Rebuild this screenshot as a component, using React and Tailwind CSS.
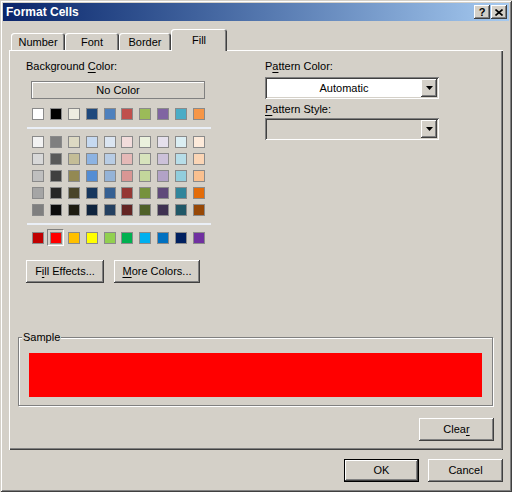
import React from "react";

const raised =
  "shadow-[inset_-1px_-1px_#404040,inset_1px_1px_#ffffff,inset_-2px_-2px_#808080]";
const sunken =
  "shadow-[inset_1px_1px_#808080,inset_-1px_-1px_#ffffff,inset_2px_2px_#404040,inset_-2px_-2px_#d4d0c8]";

const row1 = ["#FFFFFF", "#000000", "#EEECE1", "#1F497D", "#4F81BD", "#C0504D", "#9BBB59", "#8064A2", "#4BACC6", "#F79646"];
const tints = [
  ["#F2F2F2", "#7F7F7F", "#DDD9C3", "#C6D9F0", "#DBE5F1", "#F2DCDB", "#EBF1DD", "#E5E0EC", "#DBEEF3", "#FDEADA"],
  ["#D8D8D8", "#595959", "#C4BD97", "#8DB3E2", "#B8CCE4", "#E5B9B7", "#D7E3BC", "#CCC1D9", "#B7DDE8", "#FBD5B5"],
  ["#BFBFBF", "#3F3F3F", "#938953", "#548DD4", "#95B3D7", "#D99694", "#C3D69B", "#B2A2C7", "#92CDDC", "#FAC08F"],
  ["#A5A5A5", "#262626", "#494429", "#17365D", "#366092", "#953734", "#76923C", "#5F497A", "#31859B", "#E36C09"],
  ["#7F7F7F", "#0C0C0C", "#1D1B10", "#0F243E", "#244061", "#632423", "#4F6128", "#3F3151", "#205867", "#974806"],
];
const standard = ["#C00000", "#FF0000", "#FFC000", "#FFFF00", "#92D050", "#00B050", "#00B0F0", "#0070C0", "#002060", "#7030A0"];

function Swatch({ color, selected }) {
  return (
    <div className="relative w-[12px] h-[12px]">
      {selected && (
        <div className="absolute -left-[3px] -top-[3px] w-[17px] h-[17px] border border-t-[#808080] border-l-[#808080] border-r-white border-b-white" />
      )}
      <div
        className="relative w-[12px] h-[12px] border border-[#8a8a8a]"
        style={{ backgroundColor: color }}
      />
    </div>
  );
}

function SwatchRow({ colors, selectedIndex }) {
  return (
    <div className="ml-[6px] w-[173px] flex justify-between">
      {colors.map((c, i) => (
        <Swatch key={i} color={c} selected={i === selectedIndex} />
      ))}
    </div>
  );
}

function U({ children }) {
  return <span className="underline underline-offset-[2px] decoration-[1px]">{children}</span>;
}

function Arrow() {
  return (
    <svg width="7" height="4" viewBox="0 0 7 4">
      <polygon points="0,0 7,0 3.5,4" fill="#000" />
    </svg>
  );
}

function Dropdown({ value, disabled }) {
  return (
    <div
      className={`w-[174px] h-[22px] p-[2px] flex ${sunken} ${disabled ? "bg-[#d4d0c8]" : "bg-white"}`}
    >
      <div className="flex-1 flex items-center justify-center">{value}</div>
      <div className={`w-[16px] h-[18px] bg-[#d4d0c8] flex items-center justify-center ${raised}`}>
        <Arrow />
      </div>
    </div>
  );
}

function Button({ children, w, isDefault }) {
  return (
    <div
      className={`h-[23px] flex items-center justify-center bg-[#d4d0c8] ${
        isDefault
          ? "shadow-[inset_0_0_0_1px_#000000,inset_-2px_-2px_#404040,inset_2px_2px_#ffffff,inset_-3px_-3px_#808080]"
          : raised
      } ${w}`}
    >
      {children}
    </div>
  );
}

function Tab({ label, w, selected }) {
  return (
    <div
      className={`${w} flex items-center justify-center bg-[#d4d0c8] rounded-t-[3px] shadow-[inset_1px_1px_#ffffff,inset_-1px_0_#404040,inset_-2px_0_#808080] ${
        selected ? "relative z-10 h-[22px] -mb-[1px] pt-[1px]" : "h-[17px] pt-[1px]"
      }`}
    >
      {label}
    </div>
  );
}

export default function App() {
  return (
    <div className="w-[512px] h-[492px] bg-[#d4d0c8] p-[3px] text-[11px] leading-[13px] text-black font-['Liberation_Sans',Arial,sans-serif] shadow-[inset_1px_1px_#d4d0c8,inset_-1px_-1px_#404040,inset_2px_2px_#ffffff,inset_-2px_-2px_#808080] flex flex-col">
      {/* Title bar */}
      <div className="h-[18px] bg-linear-to-r from-[#0a246a] to-[#a6caf0] flex items-center pl-[3px] pr-[2px]">
        <div className="flex-1 text-white font-bold text-[12px] leading-[14px]">Format Cells</div>
        <div className="flex gap-[1px]">
          <div className={`w-[16px] h-[14px] bg-[#d4d0c8] flex items-center justify-center font-bold text-[11px] leading-[12px] ${raised}`}>
            ?
          </div>
          <div className={`w-[16px] h-[14px] bg-[#d4d0c8] flex items-center justify-center ${raised}`}>
            <svg width="8" height="7" viewBox="0 0 8 7">
              <path d="M0.5 0.5 L7.5 6.5 M7.5 0.5 L0.5 6.5" stroke="#000" strokeWidth="1.6" />
            </svg>
          </div>
        </div>
      </div>

      {/* Tabs */}
      <div className="mt-[8px] ml-[8px] h-[21px] flex items-end">
        <Tab label="Number" w="w-[54px]" />
        <Tab label="Font" w="w-[54px]" />
        <Tab label="Border" w="w-[52px]" />
        <Tab label="Fill" w="w-[56px]" selected />
      </div>

      {/* Panel */}
      <div className="ml-[6px] w-[494px] h-[400px] flex flex-col shadow-[inset_1px_1px_#ffffff,inset_-1px_-1px_#404040,inset_-2px_-2px_#808080]">
        <div className="flex pt-[10px] pl-[17px]">
          {/* Left column */}
          <div className="w-[239px] flex flex-col">
            <div className="h-[13px]">
              Background <U>C</U>olor:
            </div>
            <div className="mt-[8px] ml-[5px] w-[174px] h-[18px] border border-[#808080] shadow-[inset_1px_1px_#ffffff] flex items-center justify-center">
              No Color
            </div>
            <div className="mt-[9px]">
              <SwatchRow colors={row1} />
            </div>
            <div className="mt-[7px] ml-[1px] w-[184px] h-[2px] bg-[#eaeff7]" />
            <div className="mt-[7px] flex flex-col gap-[5px]">
              {tints.map((r, i) => (
                <SwatchRow key={i} colors={r} />
              ))}
            </div>
            <div className="mt-[7px] ml-[1px] w-[184px] h-[2px] bg-[#eaeff7]" />
            <div className="mt-[7px]">
              <SwatchRow colors={standard} selectedIndex={1} />
            </div>
            <div className="mt-[16px] flex gap-[10px]">
              <Button w="w-[78px]">
                <span>
                  F<U>i</U>ll Effects...
                </span>
              </Button>
              <Button w="w-[86px]">
                <span>
                  <U>M</U>ore Colors...
                </span>
              </Button>
            </div>
          </div>

          {/* Right column */}
          <div className="w-[174px] flex flex-col">
            <div className="h-[13px]">
              P<U>a</U>ttern Color:
            </div>
            <div className="mt-[4px]">
              <Dropdown value="Automatic" />
            </div>
            <div className="mt-[4px] h-[13px]">
              <U>P</U>attern Style:
            </div>
            <div className="mt-[2px]">
              <Dropdown value="" disabled />
            </div>
          </div>
        </div>

        {/* Sample group */}
        <div className="relative mt-[54px] ml-[9px] w-[475px] h-[69px] border border-[#808080] shadow-[inset_1px_1px_#ffffff,1px_1px_#ffffff]">
          <div className="absolute -top-[7px] left-[3px] px-[1px] bg-[#d4d0c8] h-[13px]">Sample</div>
          <div className="mt-[15px] ml-[10px] w-[453px] h-[44px] bg-[#ff0000]" />
        </div>

        <div className="mt-[12px] self-end mr-[9px]">
          <Button w="w-[75px]">
            <span>
              Clea<U>r</U>
            </span>
          </Button>
        </div>
      </div>

      {/* Bottom buttons */}
      <div className="mt-[9px] mr-[6px] flex justify-end gap-[9px]">
        <Button w="w-[75px]" isDefault>
          OK
        </Button>
        <Button w="w-[75px]">Cancel</Button>
      </div>
    </div>
  );
}
